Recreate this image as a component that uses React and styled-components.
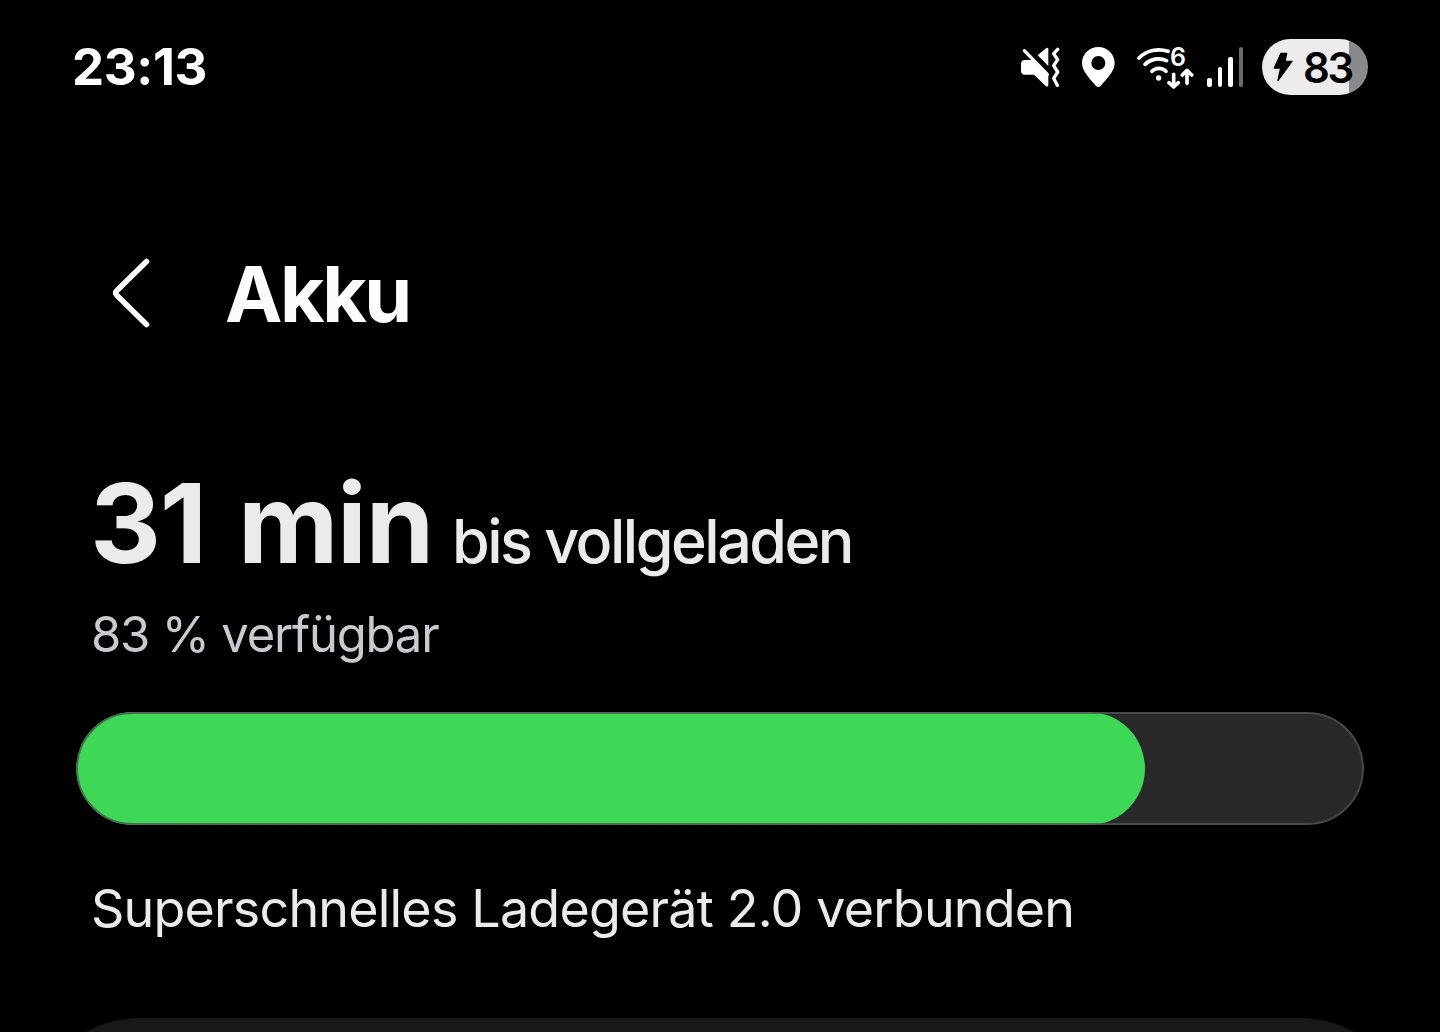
import React from 'react'
import styled, { createGlobalStyle } from 'styled-components'

const level = 83

function StatusBar() {
  return (
    <Status>
      <Clock>23:13</Clock>
      <div className="icons">
        <svg width="40" height="40" viewBox="30 51 120 120">
          <path d="M83 76L108 55Q115 51 115 58V108Z" fill="#fff" />
          <path d="M45 90H68L115 136V164Q115 173 107 168L72 134H45Q33 134 33 122V102Q33 90 45 90Z" fill="#fff" />
          <path d="M43 62L112 133" stroke="#fff" strokeWidth="10" strokeLinecap="round" />
          <path d="M143 58L131 71L143 89L131 107L143 126L131 145L142 166" fill="none" stroke="#fff" strokeWidth="10" strokeLinecap="round" strokeLinejoin="round" />
        </svg>
        <svg width="33" height="40" viewBox="216 51 99 120">
          <path fillRule="evenodd" fill="#fff" d="M265 51C292 51 314 72 314 99C314 125 289 147 272 168Q265 174 258 168C241 147 216 125 216 99C216 72 238 51 265 51ZM265 78A21 21 0 1 0 265 120A21 21 0 1 0 265 78Z" />
        </svg>
        <Wifi>
          <svg width="57" height="44" viewBox="36 45 171 132">
            <g fill="none" stroke="#fff" strokeWidth="11" strokeLinecap="round" strokeLinejoin="round">
              <path d="M42 84A85 85 0 0 1 129 64" />
              <path d="M60 103A58 58 0 0 1 125 92" />
              <path d="M81 124A29 29 0 0 1 123 124" />
              <path d="M146 133V170M132 158L146 171L160 158" />
              <path d="M186 160V122M172 135L186 121L200 135" />
            </g>
            <circle cx="101" cy="144" r="8" fill="#fff" />
          </svg>
          <span>6</span>
        </Wifi>
        <Signal>
          <span />
          <span />
          <span />
          <span />
        </Signal>
        <Battery>
          <svg width="20" height="30" viewBox="68 66 60 90">
            <path d="M92 70H109L104 94H125L83 151L91 114H72Z" fill="#000" stroke="#000" strokeWidth="4" strokeLinejoin="round" />
          </svg>
          <span>{level}</span>
        </Battery>
      </div>
    </Status>
  )
}

function App() {
  return (
    <>
      <GlobalStyle />
      <Page>
        <StatusBar />
        <Header>
          <svg width="40" height="72" viewBox="0 0 40 72">
            <path d="M34.5 3.5L5 32.5Q2.500 35 5 37.500L34.500 66.500" fill="none" stroke="#fff" strokeWidth="5.5" strokeLinecap="round" strokeLinejoin="round" />
          </svg>
          <h1>Akku</h1>
        </Header>
        <Content>
          <Remaining>
            <strong>31 min</strong>
            <span>bis vollgeladen</span>
          </Remaining>
          <Available>{level} % verfügbar</Available>
          <Track>
            <Fill $level={level} />
          </Track>
          <Charger>Superschnelles Ladegerät 2.0 verbunden</Charger>
        </Content>
        <Card />
      </Page>
    </>
  )
}

const GlobalStyle = createGlobalStyle`
  *{
    box-sizing: border-box;
  }
  body{
    margin: 0;
    background: #000;
    font-family: Inter, "Liberation Sans", sans-serif;
  }
`

const Page = styled.div`
  display: flex;
  flex-direction: column;
  height: 1032px;
  overflow: hidden;
  background: #000;
  color: #ebebeb;
  white-space: nowrap;
`

const Status = styled.div`
  display: flex;
  flex: none;
  justify-content: space-between;
  align-items: center;
  height: 134px;
  padding: 0 72px;
  .icons{
    display: flex;
    align-items: center;
    svg{
      flex: none;
    }
    > svg:nth-child(2){
      margin: 0 22px;
    }
  }
`

const Clock = styled.span`
  padding-bottom: 2px;
  color: #fff;
  font-size: 51px;
  font-weight: 700;
  letter-spacing: -0.4px;
`

const Wifi = styled.div`
  position: relative;
  display: flex;
  span{
    position: absolute;
    top: -3px;
    left: 33px;
    color: #fff;
    font-size: 25px;
    font-weight: 600;
    line-height: 30px;
  }
`

const Signal = styled.div`
  display: flex;
  align-items: flex-end;
  gap: 6px;
  height: 40px;
  margin: 0 19px 0 13px;
  span{
    width: 4.5px;
    height: 9px;
    border-radius: 2px;
    background: #fff;
  }
  span:nth-child(2){
    height: 20px;
  }
  span:nth-child(3){
    height: 30px;
  }
  span:nth-child(4){
    height: 40px;
    background: #6c6c6c;
  }
`

const Battery = styled.div`
  display: flex;
  align-items: center;
  gap: 10px;
  width: 106px;
  height: 56px;
  padding-left: 11px;
  border-radius: 28px;
  background: linear-gradient(to right, #ececec 87px, #8a8a8a 87px);
  span{
    color: #000;
    font-size: 42px;
    font-weight: 600;
    letter-spacing: -2.5px;
  }
`

const Header = styled.header`
  display: flex;
  flex: none;
  align-items: center;
  height: 320px;
  padding-left: 112px;
  gap: 73px;
  h1{
    margin: 0;
    color: #fcfcff;
    font-size: 77px;
    font-weight: 750;
    letter-spacing: -2.5px;
  }
`

const Content = styled.main`
  display: flex;
  flex-direction: column;
  flex: none;
  padding: 0 76px;
`

const Remaining = styled.div`
  display: flex;
  align-items: baseline;
  padding-left: 14px;
  gap: 19px;
  height: 138px;
  line-height: 138px;
  strong{
    font-size: 110px;
    font-weight: 700;
    letter-spacing: -1.2px;
    word-spacing: 7px;
  }
  span{
    font-size: 61px;
    font-weight: 500;
    letter-spacing: -2.5px;
  }
`

const Available = styled.div`
  padding: 2px 0 0 15px;
  color: #cacace;
  font-size: 49px;
  line-height: 82px;
  letter-spacing: -1.2px;
`

const Track = styled.div`
  position: relative;
  height: 113px;
  margin-top: 36px;
  border-radius: 57px;
  overflow: hidden;
  background: #29292b;
  &::after{
    content: '';
    position: absolute;
    inset: 0;
    border: 2px solid rgba(80, 80, 83, 0.8);
    border-radius: 57px;
  }
`

const Fill = styled.div`
  width: ${(props) => props.$level}%;
  height: 100%;
  border-radius: 57px;
  background: #3cd856;
`

const Charger = styled.div`
  margin-top: 44px;
  padding-left: 15px;
  font-size: 52px;
  line-height: 80px;
  letter-spacing: -0.8px;
`

const Card = styled.section`
  flex: none;
  height: 240px;
  margin: 69px 30px 0;
  border-radius: 110px;
  background: #18181a;
`

export default App
